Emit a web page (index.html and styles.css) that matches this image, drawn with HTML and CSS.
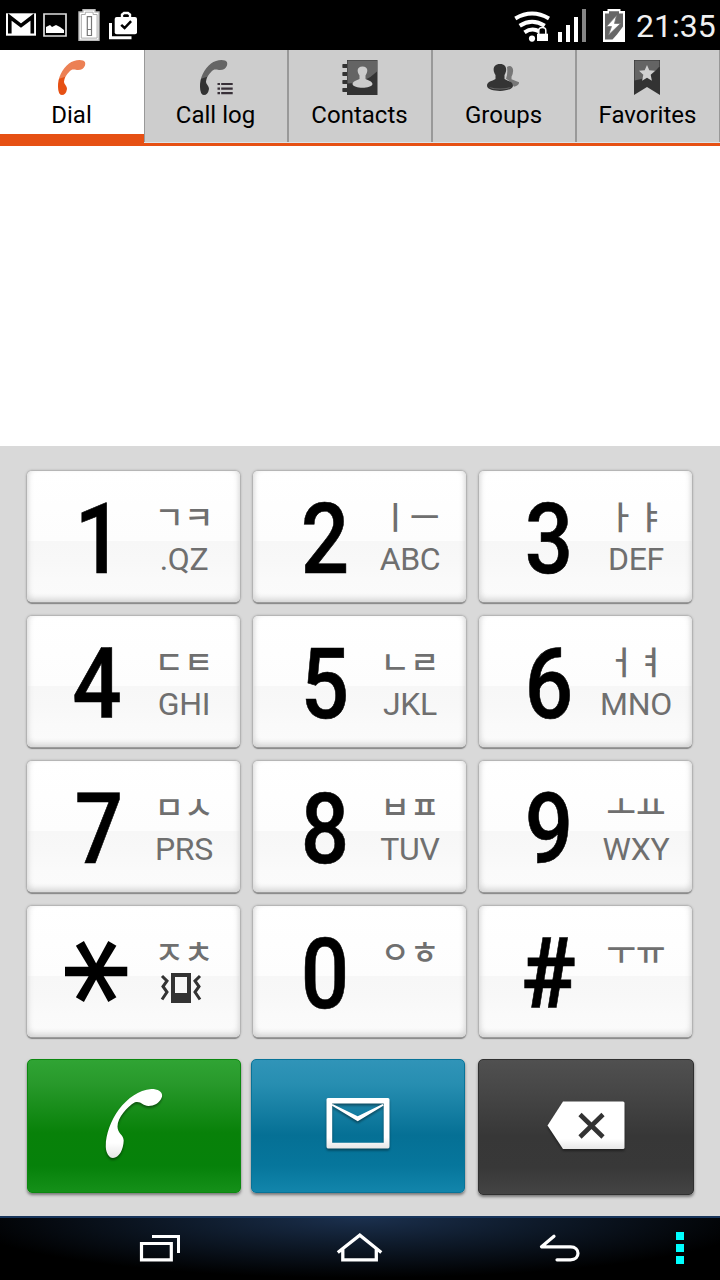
FILE: index.html
```html
<!DOCTYPE html>
<html lang="en">
<head>
<meta charset="utf-8">
<title>Dial</title>
<link rel="stylesheet" href="styles.css">
</head>
<body>
<div class="phone">
  <header class="status">
    <div class="status-left">
      <svg width="30" height="50" viewBox="6 0 30 50"><path fill="#fff" d="M6 13.3h30v22.4H6z"/><path d="M9.800 33.600V17l11.200 8.600L32.300 17v16.600" fill="none" stroke="#000" stroke-width="3.600"/></svg>
      <svg width="24" height="50" viewBox="43 0 24 50"><path d="M44 14h22v22H44z" fill="none" stroke="#ddd" stroke-width="1.700"/><path d="M46 33v-6l4-2 2 2 4-2 4 2 4 3v3z" fill="#fff"/></svg>
      <svg width="22" height="50" viewBox="78 0 22 50"><path d="M79 12h4V9.700h12V12h4v28.300H79z" fill="#fff" stroke="#bbb" stroke-width="1.400"/><path d="M81.300 14.500h4v-2.300h7.800v2.300h4v23.600H81.300z" fill="none" stroke="#aaa"/><path d="M87.300 16.700h4.200v18.800h-4.200zM87.300 29.500h4.200" fill="none" stroke="#777" stroke-width="1.200"/></svg>
      <svg width="28" height="50" viewBox="109 0 28 50"><path d="M110.500 23v14.700h21" fill="none" stroke="#fff" stroke-width="3"/><rect x="114.700" y="17" width="22.300" height="17.300" rx="2" fill="#fff"/><path d="M122 18v-3.500l2-1.500h4l2 1.500V18" fill="none" stroke="#fff" stroke-width="2.400"/><path d="m121.200 24.800 3.400 3.200 6.500-6.800" fill="none" stroke="#000" stroke-width="2.500"/></svg>
    </div>
    <div class="status-right">
      <svg width="37" height="50" viewBox="514 0 37 50"><g fill="none" stroke="#fff" stroke-width="4"><path d="M515.300 18.500q16.700-9.800 33.700 0"/><path d="M519.700 25.800q12.300-8 25 0"/><path d="M524.500 32.300q7.500-5.200 14.500-1"/></g><circle cx="532" cy="38.600" r="3.100" fill="#fff"/><path d="M536 33h13v9h-13z"/><path d="M538.800 34v-3.500q0-3 3.500-3t3.500 3V34" stroke="#fff" stroke-width="1.500"/><path d="M537 33.700h11V41h-11z" fill="#fff"/></svg>
      <svg width="28" height="50" viewBox="558 0 28 50"><path d="M558 32h4v10h-4zM566 25h4v17h-4zM574 17h4v25h-4z" fill="#fff"/><path d="M582 9h4v33h-4z" fill="#858585"/></svg>
      <svg width="22" height="50" viewBox="603 0 22 50"><path d="M603 11h4.500V9h13v2h4.500v31h-22z" fill="#fff"/><path d="M605 13.500h4v-2.300h10v2.300h4v13l-6 8-4.500 5H605z" fill="#666"/><path d="m616.500 15.500-10 11h5l-3 8.500 12-11.500h-6z" fill="#fff" stroke="#777" stroke-width=".8"/></svg>
      <span class="clock">21:35</span>
    </div>
  </header>

  <nav class="tabs">
    <a class="tab active">
      <svg width="40" height="42" viewBox="52 54 40 42"><defs><linearGradient id="o" x1="0" y1="0" x2=".25" y2="1"><stop offset=".5" stop-color="#ec8054"/><stop offset=".53" stop-color="#e65014"/></linearGradient></defs><path fill="url(#o)" d="M58 87c-.3-9 4-18 11-23.500 4-3 10-4.500 14-3q3 1 2 5-2 5-8 4.500c-3.500-.2-4.500-1.500-7.500 1.500q-5 5-5.500 10c0 3 3 4 3 7.500q-1 6-5.200 6-3.600-.1-3.800-8z"/></svg>
      <span>Dial</span>
    </a>
    <a class="tab">
      <svg width="40" height="42" viewBox="196 54 40 42"><defs><linearGradient id="k" x1="0" y1="0" x2=".25" y2="1"><stop offset=".5" stop-color="#656565"/><stop offset=".53" stop-color="#333"/></linearGradient></defs><path transform="translate(142)" fill="url(#k)" d="M58 87c-.3-9 4-18 11-23.500 4-3 10-4.500 14-3q3 1 2 5-2 5-8 4.500c-3.500-.2-4.500-1.500-7.500 1.500q-5 5-5.500 10c0 3 3 4 3 7.500q-1 6-5.200 6-3.600-.1-3.800-8z"/><path d="M217.500 84h2.500m1.200 0h11.500m-15.200 4.600h2.500m1.200 0h11.500m-15.200 4.500h2.500m1.200 0h11.500" stroke="#383038" stroke-width="2.100"/></svg>
      <span>Call log</span>
    </a>
    <a class="tab">
      <svg width="40" height="42" viewBox="340 54 40 42"><path fill="#333" d="M347 60h30.500v35H347v-3h-4.500v-4h4.500v-4h-4.500v-4h4.500v-4h-4.500v-4h4.500v-4h-4.500v-4h4.500z"/><path d="M342.500 66h5m-5 8h5m-5 8h5m-5 8h5" stroke="#333" stroke-width="1"/><path fill="#646464" d="M347.500 60.500H377v11q-12 12-29.500 12z"/><path fill="#ccc" d="M362.500 66.500c6 0 5.700 5.500 3 9v3.500c3 1.500 6.500 2 7 5-1 5-19 5-20 0 .5-3 4-3.500 7-5v-3.500c-2.700-3.500-3-9 3-9z"/></svg>
      <span>Contacts</span>
    </a>
    <a class="tab">
      <svg width="40" height="42" viewBox="484 54 40 42"><path fill="#777" d="M507 67q3-2 5 .2 2.500 3-.5 9.500v2.500l7.500 3q.5 3-5 4.500-4-6-8-8 2-5 1-11.700z"/><path fill="#343434" d="M500 64c7.500 0 7 7 4.500 11v4c4 2.500 8.500 2 8.500 7-1 6.500-25 6.500-26 0 0-5 5-4.500 8.500-7v-4c-3-4-3-11 4.500-11z"/><path fill="#666" d="M489 87q11 3 22 0-2 2.500-11 2.500t-11-2.500z"/></svg>
      <span>Groups</span>
    </a>
    <a class="tab">
      <svg width="40" height="42" viewBox="628 54 40 42"><path fill="#333" d="M634 60h26v35l-13-8-13 8z"/><path fill="#646464" d="M634.600 60.600h24.800v6q-8 11-24.800 14z"/><path fill="#d0d0d0" d="m647 65 2.300 5.200 5.700.6-4.300 4 1.200 6-4.900-3-4.900 3 1.200-6-4.300-4 5.700-.6z"/></svg>
      <span>Favorites</span>
    </a>
  </nav>

  <main class="entry"></main>

  <section class="pad">
    <div class="keys">
      <button class="key"><span class="digit one">1</span><span class="sub"><span class="ko">ㄱㅋ</span><span class="en">.QZ</span></span></button>
      <button class="key"><span class="digit">2</span><span class="sub"><span class="ko">ㅣㅡ</span><span class="en">ABC</span></span></button>
      <button class="key"><span class="digit shifted">3</span><span class="sub"><span class="ko">ㅏㅑ</span><span class="en">DEF</span></span></button>
      <button class="key"><span class="digit four">4</span><span class="sub"><span class="ko">ㄷㅌ</span><span class="en">GHI</span></span></button>
      <button class="key"><span class="digit">5</span><span class="sub"><span class="ko">ㄴㄹ</span><span class="en">JKL</span></span></button>
      <button class="key"><span class="digit shifted">6</span><span class="sub"><span class="ko">ㅓㅕ</span><span class="en">MNO</span></span></button>
      <button class="key"><span class="digit">7</span><span class="sub"><span class="ko">ㅁㅅ</span><span class="en">PRS</span></span></button>
      <button class="key"><span class="digit">8</span><span class="sub"><span class="ko">ㅂㅍ</span><span class="en">TUV</span></span></button>
      <button class="key"><span class="digit shifted">9</span><span class="sub"><span class="ko">ㅗㅛ</span><span class="en">WXY</span></span></button>
      <button class="key"><span class="digit star">*</span><span class="sub"><span class="ko">ㅈㅊ</span><svg class="vibrate" width="42" height="32" viewBox="161 972 42 32"><path fill="#333" fill-rule="evenodd" d="M172 973h20v30h-20zm4 4v16h12v-16z"/><path d="m163 976 5 5-4 5.500 4 5.500-5 7.500M201 976l-5 5 4 5.500-4 5.500 5 7.500" fill="none" stroke="#333" stroke-width="3"/></svg></span></button>
      <button class="key"><span class="digit">0</span><span class="sub"><span class="ko">ㅇㅎ</span></span></button>
      <button class="key"><span class="digit hash">#</span><span class="sub"><span class="ko">ㅜㅠ</span></span></button>
    </div>
    <div class="actions">
      <button class="action call"><svg width="66" height="80" viewBox="101 1085 66 80"><defs><linearGradient id="w" x1="0" y1="0" x2="0" y2="1"><stop offset=".78" stop-color="#fff"/><stop offset="1" stop-color="#e6e6e6"/></linearGradient></defs><path fill="url(#w)" d="M105.800 1147c-.5-24 20-56 45.500-58 8 0 12.500 4 10.200 9-2 5-7.500 8-13 8-6 0-7.500-5.500-14-3.500-7 4-17 15-17 24 0 7 6 8 6.200 14-.2 9-4.700 17.500-10.700 17.500-4 0-7-5-7.200-11z"/></svg></button>
      <button class="action message"><svg width="66" height="56" viewBox="325 1096 66 56"><path fill="url(#w)" fill-rule="evenodd" d="M328 1098h60q1.500 0 1.500 1.500v47q0 2-1.500 2h-60q-1.500 0-1.500-2v-47q0-1.500 1.500-1.500zm4.200 5.500v39.300h51.500v-39.300z"/><path fill="#fff" d="m332.500 1104 25.200 12.300 25-12.300 1 1.500-26 15.700-26-15.700z"/></svg></button>
      <button class="action delete"><svg width="82" height="54" viewBox="545 1099 82 54"><path fill="url(#w)" d="M563 1101.500h60q1.500 0 1.500 1.500v44.500q0 1.500-1.500 1.500h-60l-15.500-23.500z"/><path d="m580 1114.500 23 22.500m0-22.500-23 22.500" stroke="#333" stroke-width="4.600"/></svg></button>
    </div>
  </section>

  <footer class="navbar">
    <svg width="42" height="64" viewBox="139 1216 42 64"><path d="M152 1236.500h26.500V1253" fill="none" stroke="#fff" stroke-width="3"/><path d="M141.500 1243.500h29.800v16.300h-29.800z" fill="none" stroke="#fff" stroke-width="3.200"/></svg>
    <svg width="48" height="64" viewBox="336 1216 48 64"><path d="m337.800 1252.500 22-17.300 21.500 17.300M342.800 1248v11.800h33.500V1248" fill="none" stroke="#fff" stroke-width="3.300"/></svg>
    <svg width="42" height="64" viewBox="538 1216 42 64"><path d="m554 1236.300-12.500 10.500h29c10 0 10 13 0 13H557" fill="none" stroke="#fff" stroke-width="3.200" stroke-linecap="round" stroke-linejoin="round"/></svg>
    <svg width="8" height="64" viewBox="676 1216 8 64"><path fill="#0ff" d="M676 1232h8v8h-8zm0 12h8v8h-8zm0 12h8v8h-8z"/></svg>
  </footer>
</div>
</body>
</html>
```
FILE: styles.css
```css
* { box-sizing: border-box; }
body { margin: 0; background: #fff; font-family: Roboto, "Noto Sans CJK KR", sans-serif; }
svg { display: block; flex: none; }
button { border: 0; padding: 0; font: inherit; }
.phone { width: 720px; height: 1280px; display: flex; flex-direction: column; overflow: hidden; }

.status { height: 50px; flex: none; background: #000; display: flex; justify-content: space-between; padding: 0 4px 0 6px; }
.status-left { display: flex; }
.status-left svg:nth-child(2) { margin-left: 7px; }
.status-left svg:nth-child(3) { margin-left: 11px; }
.status-left svg:nth-child(4) { margin-left: 9px; }
.status-right { display: flex; width: 202px; }
.status-right svg:nth-child(2) { margin-left: 7px; }
.status-right svg:nth-child(3) { margin-left: 17px; }
.clock { color: #f0f0f0; font-size: 32px; line-height: 52px; margin-left: 11px; white-space: nowrap; }

.tabs { height: 96px; flex: none; display: grid; grid-template-columns: repeat(5, 144px); background: #cdcdcd; border-bottom: 3px solid #e65014; }
.tab { display: flex; flex-direction: column; align-items: center; padding: 4px 1px 0 0; height: 93px; border-bottom: 1px solid #dce3e8; box-shadow: inset 1px 0 #999, inset -1px 0 #999; font-size: 24px; line-height: 34px; color: #000; white-space: nowrap; }
.tab svg { margin-left: 1px; }
.tab span { margin-top: 2px; }
.tab.active { background: #fff; box-shadow: none; border-bottom: 9px solid #e65014; }

.entry { height: 300px; flex: none; background: #fff; }

.pad { height: 770px; flex: none; background: #d9d9d9; padding: 25px 26px 0 27px; }
.keys { display: grid; grid-template-columns: repeat(3, 213px); grid-auto-rows: 131px; gap: 14px 13px; }
.key {
  display: flex; padding-left: 21px; border-radius: 5px; text-align: left;
  background: linear-gradient(#fff 0, #fdfdfd 70px, #f7f7f7 70px, #f8f8f8 90px, #fafafa 108px, #fbfbfb 100%);
  box-shadow: 0 0 2px 1px #aaa, 0 2px 1px #777, inset 0 -5px 6px -2px #d2d2d2, inset 5px 0 6px -4px #ddd, inset -5px 0 6px -4px #ddd;
}
.digit { width: 100px; text-align: center; font-size: 99px; font-weight: 500; line-height: 118px; color: #000; -webkit-text-stroke: .6px #000; transform: translate(1px, 9px) scaleX(.86); }
.one { transform: translate(1px, 9px) scaleX(.86); }
.four { transform: translate(-1px, 9px) scaleX(.88); }
.shifted { transform: translate(-1px, 9px) scaleX(.86); }
.hash { font-weight: 700; transform: translate(-1px, 9px) scaleX(.92); }
.star { font-family: "DejaVu Sans", sans-serif; font-size: 132px; font-weight: 400; -webkit-text-stroke: 2px #000; transform: translate(-31px, 0) rotate(90deg); }
.sub { width: 72px; display: flex; flex-direction: column; align-items: center; padding-top: 22px; color: #6f6f6f; }
.ko { font-family: "Noto Sans CJK KR", sans-serif; font-size: 32px; line-height: 44px; font-weight: 500; white-space: nowrap; }
.en { margin-top: 2px; font-size: 32px; line-height: 40px; letter-spacing: -.3px; white-space: nowrap; }
.vibrate { margin-right: 6px; }

.actions { display: flex; align-items: flex-start; margin-top: 22px; }
.action { width: 214px; height: 134px; border-radius: 5px; display: flex; align-items: center; justify-content: center; box-shadow: 0 2px 3px #777; }
.action svg { filter: drop-shadow(0 2px 1px rgba(0, 0, 0, .4)); }
.call { background: linear-gradient(#30a434, #28992b 18%, #088109 55%, #06810a 80%, #159019 100%); border: 1px solid #0c8810; }
.message { margin-left: 10px; background: linear-gradient(#3094b8, #278eb1 18%, #057095 57%, #06769c 80%, #1285ab 100%); border: 1px solid #087398; }
.delete { margin-left: 13px; width: 216px; height: 136px; background: linear-gradient(#505050, #484848 20%, #373737 57%, #383838 80%, #444 100%); border: 1px solid #303030; }
.call svg { margin-top: -2px; }
.message svg { margin-top: -4px; }
.delete svg { margin-top: -2px; }

.navbar { height: 64px; flex: none; display: flex; background: radial-gradient(ellipse 400px 60px at 50% 0, #1b304e 0, #0e1a2a 45%, transparent 100%), #000; border-top: 2px solid #17345a; padding-left: 139px; }
.navbar svg { margin-top: -2px; }
.navbar svg:nth-child(2) { margin-left: 155px; }
.navbar svg:nth-child(3) { margin-left: 154px; }
.navbar svg:nth-child(4) { margin-left: 96px; }
```
